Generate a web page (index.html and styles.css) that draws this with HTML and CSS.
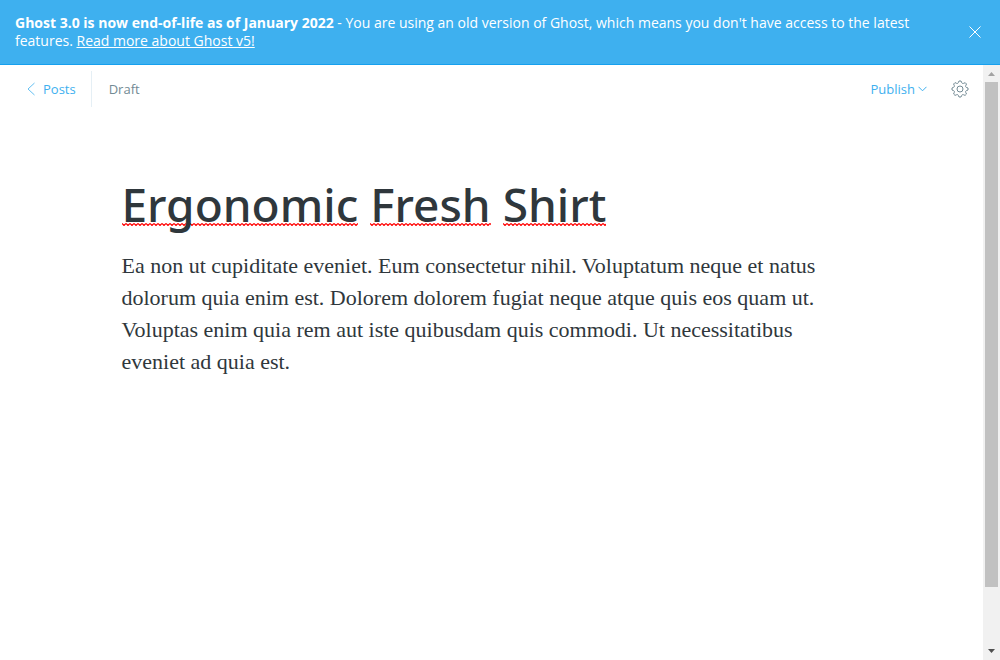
FILE: index.html
```html
<!DOCTYPE html>
<html lang="en">
<head>
<meta charset="utf-8">
<meta name="viewport" content="width=device-width, initial-scale=1">
<title>Ergonomic Fresh Shirt - Ghost</title>
<link rel="stylesheet" href="styles.css">
</head>
<body>
<div class="app">
  <aside class="alert">
    <p class="alert-text"><strong>Ghost 3.0 is now end-of-life as of January 2022</strong> - You are using an old version of Ghost, which means you don't have access to the latest features. <a href="#">Read more about Ghost v5!</a></p>
    <button class="alert-close" type="button" aria-label="Close">
      <svg width="12" height="12" viewBox="0 0 12 12"><path d="M.5.5l11 11M11.5.5l-11 11"/></svg>
    </button>
  </aside>
  <div class="viewport">
    <div class="editor">
      <header class="toolbar">
        <a class="back" href="#">
          <svg width="8" height="14" viewBox="0 0 8 14"><path d="M7.500 1L1 7l6.500 6" stroke-width=".8"/></svg>
          <span>Posts</span>
        </a>
        <span class="status">Draft</span>
        <button class="publish" type="button">
          <span>Publish</span>
          <svg width="9" height="6" viewBox="0 0 9 6"><path d="M.5.8l4 4 4-4"/></svg>
        </button>
        <button class="settings" type="button" aria-label="Settings">
          <svg width="18" height="18" viewBox="0 0 18 18"><circle cx="9" cy="9" r="3"/><path d="M7.200 2.800L8 1h2l.8 1.800c.4.700 1 .9 1.700.6l1.700-.7 1.300 1.300-.8 1.800c-.3.700 0 1.300.6 1.600L17 8v2l-1.700.7c-.7.300-.9.900-.6 1.600l.8 1.700-1.400 1.400-1.700-.7c-.7-.3-1.300-.1-1.600.6L10 17H8l-.7-1.700c-.3-.7-.9-.9-1.600-.6l-1.700.7L2.600 14l.7-1.700c.3-.7.1-1.300-.6-1.600L1 10V8l1.700-.8c.7-.3.900-.9.600-1.600L2.600 4 4 2.600l1.700.8c.7.300 1.200.1 1.500-.6z" stroke-linejoin="round"/></svg>
        </button>
      </header>
      <main class="post">
        <h1 class="title" contenteditable="true" spellcheck="false"><span class="misspelt">Ergonomic</span> <span class="misspelt">Fresh</span> <span class="misspelt">Shirt</span></h1>
        <div class="content" contenteditable="true" spellcheck="false">
          <p>Ea non ut cupiditate eveniet. Eum consectetur nihil. Voluptatum neque et natus dolorum quia enim est. Dolorem dolorem fugiat neque atque quis eos quam ut. Voluptas enim quia rem aut iste quibusdam quis commodi. Ut necessitatibus eveniet ad quia est.</p>
        </div>
      </main>
    </div>
    <div class="scrollbar" aria-hidden="true">
      <svg class="arrow arrow-up" width="17" height="17" viewBox="0 0 17 17"><path d="M5 11h7L8.500 7z"/></svg>
      <div class="track"><div class="thumb"></div></div>
      <svg class="arrow" width="17" height="17" viewBox="0 0 17 17"><path d="M5 6h7l-3.500 4z"/></svg>
    </div>
  </div>
</div>
</body>
</html>
```
FILE: styles.css
```css
*, *::before, *::after {
  box-sizing: border-box;
}

body {
  margin: 0;
  background: #fff;
  color: #2f373c;
  font: 13px/18px "Open Sans", "Noto Sans", sans-serif;
}

button {
  padding: 0;
  border: 0;
  background: none;
  color: inherit;
  font: inherit;
  cursor: pointer;
}

svg {
  display: block;
  flex: none;
  fill: none;
  stroke: currentColor;
}

.app {
  display: flex;
  flex-direction: column;
  height: 100vh;
}

.alert {
  display: flex;
  align-items: center;
  justify-content: space-between;
  gap: 48px;
  padding: 14px 19px 14px 15px;
  border-bottom: 1px solid #16a0ee;
  background: #3eb0ef;
  color: #fff;
}

.alert-text {
  margin: 0;
  flex: 1;
  font-size: 14px;
}

.alert-text a {
  color: inherit;
}

.viewport {
  display: flex;
  flex: 1;
  min-height: 0;
}

.editor {
  flex: 1;
  min-width: 0;
}

.toolbar {
  display: flex;
  align-items: center;
  padding: 6px 14px 0 27px;
}

.back {
  display: flex;
  align-items: center;
  gap: 8px;
  height: 36px;
  padding-right: 15px;
  border-right: 1px solid #e5eff5;
  color: #3eb0ef;
  text-decoration: none;
}

.status {
  flex: 1;
  padding-left: 17px;
  color: #738a94;
}

.publish {
  display: flex;
  align-items: center;
  gap: 3px;
  margin-right: 24px;
  color: #3eb0ef;
}

.settings {
  color: #738a94;
}

.post {
  max-width: 740px;
  margin: 0 auto;
  padding-top: 67px;
}

.title {
  margin: 0;
  font-family: "Noto Sans", "Open Sans", sans-serif;
  font-size: 46px;
  font-weight: 500;
  line-height: 60px;
  outline: 0;
}

.misspelt {
  background: url("data:image/svg+xml,%3Csvg xmlns='http://www.w3.org/2000/svg' width='4' height='3'%3E%3Cpath d='M0 .5l2 2 2-2' fill='none' stroke='red' stroke-width='1.2'/%3E%3C/svg%3E") 0 50px repeat-x;
}

.content {
  padding-top: 16px;
  font: 22px/32px "Liberation Serif", serif;
  outline: 0;
}

.content p {
  margin: 0;
}

.scrollbar {
  display: flex;
  flex-direction: column;
  width: 17px;
  background: #f1f1f1;
}

.track {
  flex: 1;
  padding: 0 2px;
}

.thumb {
  height: 90%;
  background: #c1c1c1;
}

.arrow {
  fill: #505050;
  stroke: none;
}

.arrow-up {
  fill: #a3a3a3;
}
```
